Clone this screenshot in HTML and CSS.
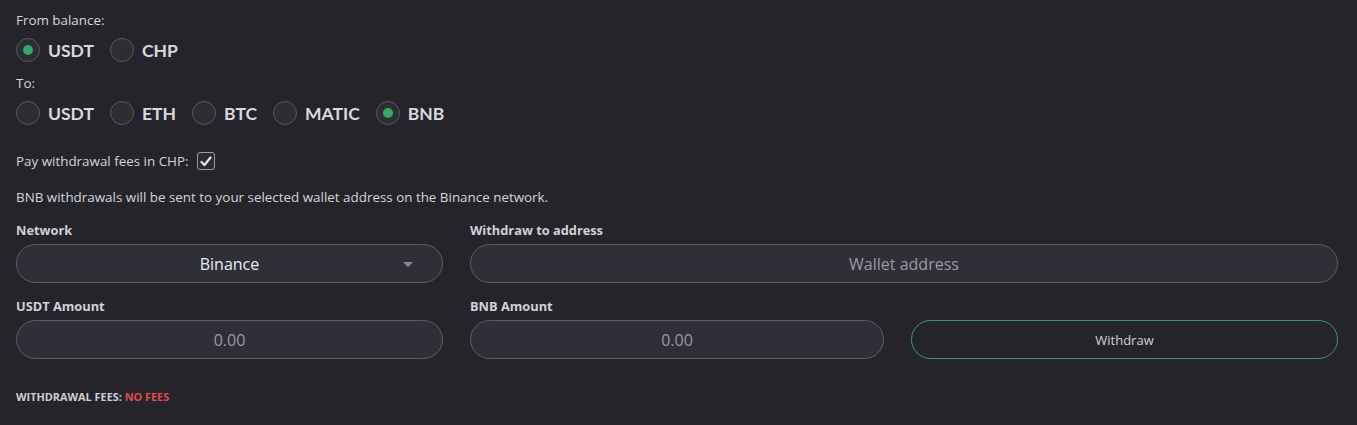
FILE: index.html
```html
<!DOCTYPE html>
<html>
<head>
<meta charset="utf-8">
<link rel="stylesheet" href="styles.css">
</head>
<body>
<div class="page">
  <div class="label">From balance:</div>
  <div class="radios">
    <label class="radio"><span class="dot on"></span><span>USDT</span></label>
    <label class="radio"><span class="dot"></span><span>CHP</span></label>
  </div>
  <div class="label to">To:</div>
  <div class="radios">
    <label class="radio"><span class="dot"></span><span>USDT</span></label>
    <label class="radio"><span class="dot"></span><span>ETH</span></label>
    <label class="radio"><span class="dot"></span><span>BTC</span></label>
    <label class="radio"><span class="dot"></span><span>MATIC</span></label>
    <label class="radio"><span class="dot on"></span><span>BNB</span></label>
  </div>
  <div class="fees-row">
    <span>Pay withdrawal fees in CHP:</span>
    <span class="check"><svg width="12" height="11" viewBox="0 0 12 11"><path d="M1.5 6 L4.5 9 L10.5 1.5" fill="none" stroke="#e8e8ea" stroke-width="2.2" stroke-linecap="round" stroke-linejoin="round"/></svg></span>
  </div>
  <p class="info">BNB withdrawals will be sent to your selected wallet address on the Binance network.</p>
  <div class="form">
    <div class="field">
      <div class="flabel">Network</div>
      <div class="input select"><span>Binance</span><span class="caret"></span></div>
    </div>
    <div class="field wide">
      <div class="flabel">Withdraw to address</div>
      <div class="input placeholder">Wallet address</div>
    </div>
    <div class="field">
      <div class="flabel">USDT Amount</div>
      <div class="input placeholder">0.00</div>
    </div>
    <div class="field">
      <div class="flabel">BNB Amount</div>
      <div class="input placeholder">0.00</div>
    </div>
    <div class="field">
      <div class="flabel">&nbsp;</div>
      <div class="input button">Withdraw</div>
    </div>
  </div>
  <div class="summary">WITHDRAWAL FEES: <span class="red">NO FEES</span></div>
</div>
</body>
</html>
```

FILE: styles.css
```css
html, body {
  margin: 0;
  padding: 0;
  background: #25242a;
}
body {
  font-family: "Open Sans", "Noto Sans", sans-serif;
  color: #dcdce0;
}
.page {
  padding: 12px 19px 0 16px;
}
.label {
  font-size: 13.4px;
  line-height: 16px;
  color: #d6d6da;
}
.label.to {
  margin-top: 13px;
}
.radios {
  display: flex;
  gap: 16px;
  margin-top: 10px;
  height: 24px;
  align-items: center;
}
.radio {
  display: flex;
  align-items: center;
  gap: 8px;
  font-family: Lato, "Open Sans", sans-serif;
  font-size: 17.5px;
  font-weight: 700;
  color: #d9d9dd;
}
.dot {
  width: 22px;
  height: 22px;
  border: 1px solid #5a5a60;
  border-radius: 50%;
  background: #2d2d34;
  display: flex;
  align-items: center;
  justify-content: center;
}
.dot.on::after {
  content: "";
  width: 10px;
  height: 10px;
  border-radius: 50%;
  background: #35a865;
}
.fees-row {
  display: flex;
  align-items: center;
  gap: 8px;
  margin-top: 27px;
  font-size: 13.4px;
  color: #d6d6da;
  height: 18px;
}
.check {
  width: 16px;
  height: 16px;
  border: 1px solid #9a9aa0;
  border-radius: 3px;
  display: flex;
  align-items: center;
  justify-content: center;
  background: #2a2a30;
}
.info {
  margin: 19px 0 0;
  font-size: 13.4px;
  line-height: 16px;
  color: #d6d6da;
}
.form {
  margin-top: 17px;
  display: grid;
  grid-template-columns: 427px 414px 427px;
  column-gap: 27px;
  row-gap: 15px;
}
.field.wide {
  grid-column: span 2;
}
.flabel {
  font-size: 12.8px;
  font-weight: 700;
  line-height: 16px;
  height: 16px;
  color: #d2d2d6;
  margin-bottom: 6px;
}
.input {
  height: 37px;
  border: 1px solid #5e5e64;
  border-radius: 20px;
  background: #2f2f37;
  display: flex;
  align-items: center;
  justify-content: center;
  font-size: 16px;
  position: relative;
}
.select {
  color: #ececf0;
  font-size: 16px;
}
.caret {
  position: absolute;
  right: 29px;
  top: 17px;
  width: 0;
  height: 0;
  border-left: 5px solid transparent;
  border-right: 5px solid transparent;
  border-top: 5px solid #8a8a90;
}
.placeholder {
  color: #9c9ca2;
}
.button {
  background: transparent;
  border-color: #3b9a63;
  color: #d2d2d6;
  font-size: 13px;
}
.summary {
  margin-top: 30px;
  font-size: 10.9px;
  font-weight: 700;
  color: #cfcfd3;
}
.red {
  color: #e5485a;
}
```
